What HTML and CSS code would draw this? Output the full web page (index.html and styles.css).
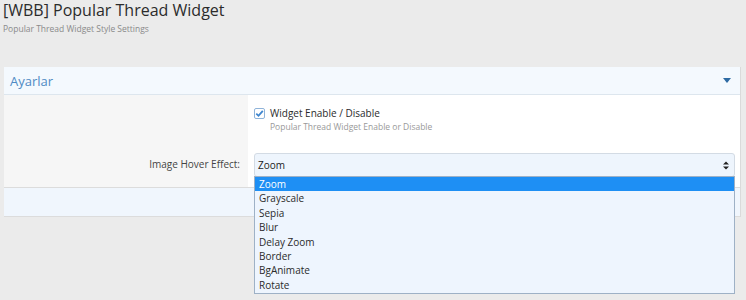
FILE: index.html
```html
<!DOCTYPE html>
<html lang="en">
<head>
    <meta charset="UTF-8">
    <title>[WBB] Popular Thread Widget</title>
    <link rel="stylesheet" href="styles.css">
</head>
<body>
    <div class="page-head">
        <h1>[WBB] Popular Thread Widget</h1>
        <p class="page-desc">Popular Thread Widget Style Settings</p>
    </div>
    <div class="panel">
        <div class="panel-head">
            <span class="panel-title">Ayarlar</span>
            <span class="panel-toggle"></span>
        </div>
        <div class="panel-body">
            <div class="row">
                <div class="row-label"></div>
                <div class="row-input check-row">
                    <span class="checkbox">
                        <svg width="11" height="11" viewBox="0 0 11 11">
                            <rect x="0.5" y="0.5" width="10" height="10" rx="1.5" fill="#fff" stroke="#8fb3d9"/>
                            <path d="M2.3 5.6 L4.5 7.8 L8.8 2.8" fill="none" stroke="#3f86cf" stroke-width="1.8"/>
                        </svg>
                    </span>
                    <div>
                        <div class="check-label">Widget Enable / Disable</div>
                        <div class="hint">Popular Thread Widget Enable or Disable</div>
                    </div>
                </div>
            </div>
            <div class="row">
                <div class="row-label select-label">Image Hover Effect:</div>
                <div class="row-input select-wrap">
                    <div class="select">
                        <span>Zoom</span>
                        <span class="select-arrows">
                            <svg width="6" height="9" viewBox="0 0 6 9">
                                <path d="M0 3.5 L3 0.5 L6 3.5 Z M0 5.5 L3 8.5 L6 5.5 Z" fill="#222"/>
                            </svg>
                        </span>
                    </div>
                    <ul class="options">
                        <li class="selected">Zoom</li>
                        <li>Grayscale</li>
                        <li>Sepia</li>
                        <li>Blur</li>
                        <li>Delay Zoom</li>
                        <li>Border</li>
                        <li>BgAnimate</li>
                        <li>Rotate</li>
                    </ul>
                </div>
            </div>
        </div>
        <div class="panel-foot"></div>
    </div>
</body>
</html>
```

FILE: styles.css
```css
html, body {
    min-height: 300px;
}
body {
    margin: 0;
    background-color: #ebebeb;
    font-family: "Open Sans", "Noto Sans", sans-serif;
    color: #333;
}
.page-head {
    padding: 0 0 0 3px;
    height: 67px;
}
h1 {
    margin: 0;
    font-size: 16px;
    font-weight: normal;
    line-height: 20px;
    color: #2b2b2b;
}
.page-desc {
    margin: 3px 0 0;
    font-size: 8.5px;
    color: #8a8a8a;
}
.panel {
    margin: 0 5px 0 4px;
    background: #fff;
    border-right: 1px solid #dadada;
}
.panel-head {
    display: flex;
    justify-content: space-between;
    align-items: center;
    height: 27px;
    padding: 0 9px 0 6px;
    background-color: #f4f9fe;
    border-bottom: 1px solid #dde6ee;
}
.panel-title {
    font-size: 13px;
    color: #4f8ac4;
}
.panel-toggle {
    width: 0;
    height: 0;
    border-left: 4px solid transparent;
    border-right: 4px solid transparent;
    border-top: 5px solid #2d6aa3;
}
.panel-body {
    padding-bottom: 10px;
    background: linear-gradient(to right, #f6f6f6 244px, #fff 244px);
    border-bottom: 1px solid #dcdcdc;
}
.row {
    display: flex;
}
.row-label {
    width: 236px;
    padding-right: 8px;
    text-align: right;
    font-size: 10px;
    color: #444;
}
.row-input {
    flex: 1;
    padding-left: 6px;
    padding-right: 5px;
}
.check-row {
    display: flex;
    align-items: flex-start;
    padding-top: 12px;
    height: 46px;
    box-sizing: border-box;
}
.checkbox {
    margin: 1px 5px 0 0;
    line-height: 0;
}
.check-label {
    font-size: 10px;
    color: #2b2b2b;
    line-height: 13px;
}
.hint {
    font-size: 8.5px;
    color: #999;
    margin-top: 1px;
}
.select-label {
    padding-top: 17px;
    line-height: 13px;
}
.select-wrap {
    position: relative;
    padding-top: 12px;
}
.select {
    display: flex;
    justify-content: space-between;
    align-items: center;
    height: 22px;
    padding: 0 5px 0 3px;
    border: 1px solid #d3dbe4;
    border-radius: 3px;
    background-color: #eef5fd;
    font-size: 10px;
    color: #222;
}
.select-arrows {
    line-height: 0;
}
.options {
    position: absolute;
    left: 6px;
    right: 5px;
    top: 35px;
    margin: 0;
    padding: 0 0 1px;
    list-style: none;
    background-color: #eef5fe;
    border: 1px solid #9eb1c6;
    font-size: 10px;
    color: #2b2b2b;
    z-index: 2;
}
.options li {
    height: 14.4px;
    line-height: 14.4px;
    padding-left: 4px;
}
.options li.selected {
    background-color: #1e8ff4;
    color: #fff;
}
.panel-foot {
    height: 28px;
    background-color: #f0f6fd;
    border-bottom: 1px solid #dcdcdc;
}
```
